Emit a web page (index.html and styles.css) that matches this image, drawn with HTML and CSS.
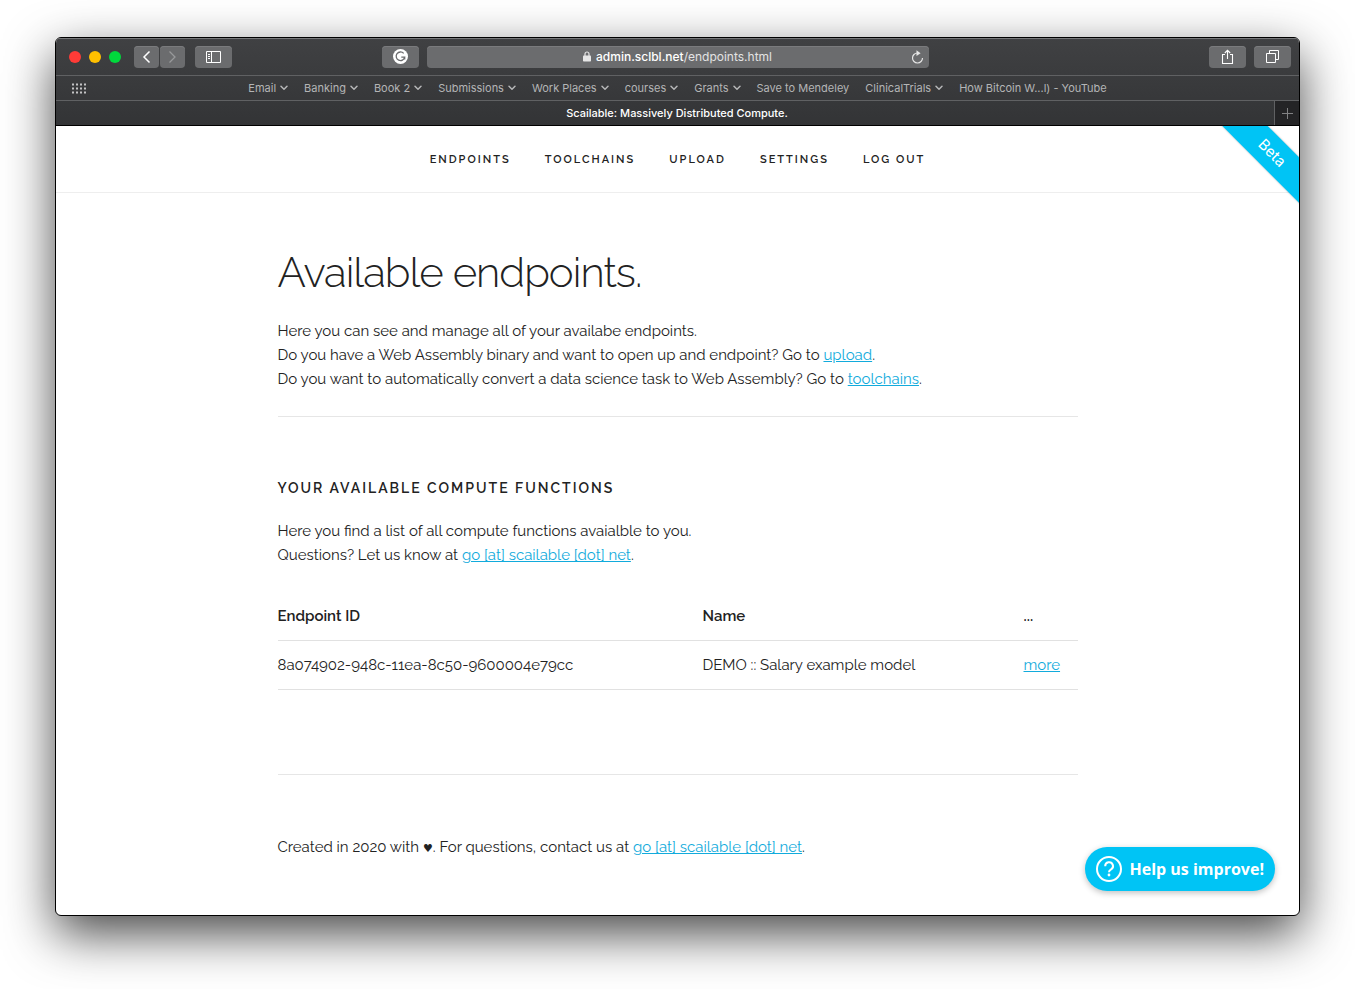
FILE: index.html
```html
<!DOCTYPE html>
<html lang="en">
<head>
<meta charset="utf-8">
<meta name="viewport" content="width=device-width, initial-scale=1">
<title>Scailable: Massively Distributed Compute.</title>
<link rel="stylesheet" href="styles.css">
</head>
<body>
<svg class="defs" aria-hidden="true">
  <symbol id="chevron" viewBox="0 0 8 6"><path d="M1 1.3 4 4.3 7 1.3" fill="none" stroke="currentColor" stroke-width="1.5" stroke-linecap="round" stroke-linejoin="round"/></symbol>
</svg>
<div class="window">
  <header class="chrome">
    <div class="toolbar">
      <div class="toolbar-side">
        <div class="lights"><span class="light red"></span><span class="light yellow"></span><span class="light green"></span></div>
        <div class="history">
          <button class="tool half" type="button" aria-label="Back"><svg width="9" height="14" viewBox="0 0 9 14"><path d="M7.5 1.5 2 7l5.500 5.500" fill="none" stroke="#fff" stroke-width="1.5"/></svg></button>
          <button class="tool half" type="button" aria-label="Forward"><svg width="9" height="14" viewBox="0 0 9 14"><path d="M1.500 1.500 7 7l-5.500 5.500" fill="none" stroke="#98999b" stroke-width="1.300"/></svg></button>
        </div>
        <button class="tool" type="button" aria-label="Show sidebar"><svg width="15" height="12" viewBox="0 0 15 12"><path d="M.5.500h14v11H.5zM5.500.500v11M2 3.500h2M2 5.500h2M2 7.500h2" fill="none" stroke="#fff"/></svg></button>
        <button class="tool push" type="button" aria-label="Grammarly"><svg width="15" height="15" viewBox="0 0 15 15"><circle cx="7.500" cy="7.500" r="7.500" fill="#fff"/><path d="M10.700 4.400A4.300 4.300 0 1 0 11.700 8.200H8.300M11.700 8v2.600" fill="none" stroke="#6b6c6e" stroke-width="1.300"/></svg></button>
      </div>
      <div class="address">
        <button class="url" type="button">
          <svg width="8" height="11" viewBox="0 0 8 11"><path d="M2 5V3a2 2 0 0 1 4 0v2" fill="none" stroke="#e6e6e6" stroke-width="1.200"/><rect y="4.500" width="8" height="6" rx=".8" fill="#e6e6e6"/></svg>
          <span><span class="host">admin.sclbl.net</span>/endpoints.html</span>
        </button>
        <button class="reload" type="button" aria-label="Reload"><svg width="13" height="14" viewBox="0 0 13 14"><path d="M6.500 3A5 5 0 1 0 11.500 8" fill="none" stroke="#e6e6e6" stroke-width="1.200"/><path d="M5.500.300 9.600 3.300 5.500 6z" fill="#e6e6e6"/></svg></button>
      </div>
      <div class="toolbar-side end">
        <button class="tool" type="button" aria-label="Share"><svg width="13" height="16" viewBox="0 0 13 16"><path d="M4 5.500H1.500v9h10v-9H9M6.500 10V1.500M3.800 4 6.500 1.300 9.200 4" fill="none" stroke="#fff" stroke-width="1.100"/></svg></button>
        <button class="tool" type="button" aria-label="Tab overview"><svg width="13" height="13" viewBox="0 0 13 13"><path d="M.5 3.500h9v9h-9zM3.500 3.500v-3h9v9h-3" fill="none" stroke="#fff"/></svg></button>
      </div>
    </div>
    <div class="favorites">
      <button class="grid-button" type="button" aria-label="Favorites"><svg width="15" height="11" viewBox="0 0 15 11"><path d="M0 1.500h15M0 5.500h15M0 9.500h15" stroke="#c4c4c5" stroke-width="2" stroke-dasharray="2 2"/></svg></button>
      <nav class="bookmarks" aria-label="Bookmarks">
        <button type="button">Email <svg><use href="#chevron"/></svg></button>
        <button type="button">Banking <svg><use href="#chevron"/></svg></button>
        <button type="button">Book 2 <svg><use href="#chevron"/></svg></button>
        <button type="button">Submissions <svg><use href="#chevron"/></svg></button>
        <button type="button">Work Places <svg><use href="#chevron"/></svg></button>
        <button type="button">courses <svg><use href="#chevron"/></svg></button>
        <button type="button">Grants <svg><use href="#chevron"/></svg></button>
        <button type="button">Save to Mendeley</button>
        <button type="button">ClinicalTrials <svg><use href="#chevron"/></svg></button>
        <button type="button">How Bitcoin W...l) - YouTube</button>
      </nav>
    </div>
    <div class="tabs">
      <button class="tab" type="button">Scailable: Massively Distributed Compute.</button>
      <button class="new-tab" type="button" aria-label="New tab"><svg width="11" height="11" viewBox="0 0 11 11"><path d="M5.500 0v11M0 5.500h11" stroke="#828284"/></svg></button>
    </div>
  </header>
  <div class="page">
    <nav class="site-nav">
      <a href="#">Endpoints</a>
      <a href="#">Toolchains</a>
      <a href="#">Upload</a>
      <a href="#">Settings</a>
      <a href="#">Log out</a>
    </nav>
    <div class="ribbon">Beta</div>
    <main class="container">
      <section class="intro">
        <h1>Available endpoints.</h1>
        <p>Here you can see and manage all of your availabe endpoints.<br>
        Do you have a Web Assembly binary and want to open up and endpoint? Go to <a href="#">upload</a>.<br>
        Do you want to automatically convert a data science task to Web Assembly? Go to <a href="#">toolchains</a>.</p>
      </section>
      <section class="functions">
        <h2>Your available compute functions</h2>
        <p>Here you find a list of all compute functions avaialble to you.<br>
        Questions? Let us know at <a href="#">go [at] scailable [dot] net</a>.</p>
        <table>
          <thead><tr><th>Endpoint ID</th><th class="col-name">Name</th><th class="col-more">...</th></tr></thead>
          <tbody><tr><td>8a074902-948c-11ea-8c50-9600004e79cc</td><td>DEMO :: Salary example model</td><td><a href="#">more</a></td></tr></tbody>
        </table>
      </section>
      <footer>Created in 2020 with <span class="heart">♥</span>. For questions, contact us at <a href="#">go [at] scailable [dot] net</a>.</footer>
    </main>
    <button class="help" type="button">
      <svg width="26" height="26" viewBox="0 0 26 26"><circle cx="13" cy="13" r="12" fill="none" stroke="#fff" stroke-width="2"/><path d="M9.200 10.300a3.900 3.900 0 1 1 5.600 3.300C13.500 14.300 13 14.900 13 16.200" fill="none" stroke="#fff" stroke-width="2"/><circle cx="13" cy="19" r="1.400" fill="#fff"/></svg>
      Help us improve!
    </button>
  </div>
</div>
</body>
</html>
```

FILE: styles.css
```css
* { box-sizing: border-box; }

body {
  margin: 0;
  min-height: 100vh;
  padding: 37px 55px 73px;
  display: flex;
  background: #fff;
  color: #222;
  font: 15px/24px Raleway, Lato, sans-serif;
}

button {
  margin: 0;
  padding: 0;
  border: 0;
  background: none;
  color: inherit;
  font: inherit;
}

svg { flex: none; }
.defs { position: absolute; width: 0; height: 0; }

.window {
  flex: 1;
  min-width: 0;
  display: flex;
  flex-direction: column;
  overflow: hidden;
  border: 1px solid #000;
  border-radius: 6px;
  background: #fff;
  box-shadow: 0 18px 50px rgba(0, 0, 0, .72);
}

.chrome {
  border-bottom: 1px solid #000;
  background: linear-gradient(#404143, #333436);
  box-shadow: inset 0 1px #77787a;
  color: #b4b5b6;
  font: 11px/14px Inter, sans-serif;
}

.toolbar {
  display: grid;
  grid-template-columns: 1fr minmax(200px, 502px) 1fr;
  gap: 8px;
  align-items: center;
  height: 38px;
  padding: 0 8px;
  border-bottom: 1px solid #606163;
}

.toolbar-side { display: flex; align-items: center; gap: 10px; }
.toolbar-side.end { justify-content: flex-end; gap: 8px; }
.lights { display: flex; gap: 8px; margin: 0 3px 0 5px; }
.light { width: 12px; height: 12px; border-radius: 50%; }
.red { background: #ff3b37; }
.yellow { background: #ffc000; }
.green { background: #00d93c; }
.history { display: flex; gap: 1px; }

.tool {
  display: flex;
  align-items: center;
  justify-content: center;
  width: 37px;
  height: 22px;
  border-radius: 4px;
  background: #6b6c6e;
  box-shadow: inset 0 1px #7a7b7d;
}
.tool.half { width: 25px; }
.push { margin-left: auto; }

.address {
  display: flex;
  align-items: center;
  height: 22px;
  padding: 0 5px;
  border-radius: 4px;
  background: #6b6c6e;
  box-shadow: inset 0 1px #7a7b7d;
  color: #e3e3e3;
  font-size: 12px;
}
.url {
  flex: 1;
  display: flex;
  align-items: center;
  justify-content: center;
  gap: 5px;
  padding-left: 13px;
}
.host { color: #fff; font-weight: 500; }
.reload { display: flex; }

.favorites {
  display: grid;
  grid-template-columns: 1fr auto 1fr;
  align-items: center;
  height: 25px;
  padding: 0 16px;
  border-bottom: 1px solid #606163;
}
.grid-button { display: flex; }
.bookmarks { display: flex; gap: 16px; white-space: nowrap; }
.bookmarks button { display: flex; align-items: center; gap: 4px; }
.bookmarks svg { width: 8px; height: 6px; }

.tabs { display: flex; height: 24px; }
.tab { flex: 1; padding-left: 24px; color: #fff; font-weight: 500; }
.new-tab {
  display: flex;
  align-items: center;
  justify-content: center;
  width: 25px;
  border-left: 1px solid #606163;
  background: #242426;
}

.page {
  position: relative;
  flex: 1;
  overflow: hidden;
}

.site-nav {
  display: flex;
  justify-content: center;
  gap: 34px;
  height: 67px;
  padding-top: 22px;
  border-bottom: 1px solid #eee;
}
.site-nav a {
  color: #222;
  font-size: 11px;
  font-weight: 600;
  letter-spacing: 2px;
  text-decoration: none;
  text-transform: uppercase;
}

.ribbon {
  position: absolute;
  top: 11px;
  right: -48px;
  width: 150px;
  background: #00c4f5;
  box-shadow: 0 0 2px rgba(0, 0, 0, .3);
  color: #fff;
  font: 15px/32px Inter, sans-serif;
  text-align: center;
  transform: rotate(45deg);
}

.container {
  max-width: 800px;
  margin: 0 auto;
}
.container a { color: #12abdc; }

h1, h2, p { margin: 0; }

.intro {
  padding: 54px 0 25px;
  border-bottom: 1px solid #e6e6e6;
}
h1 {
  margin-bottom: 20px;
  font-size: 42px;
  font-weight: 300;
  line-height: 52px;
  letter-spacing: -1px;
}

.functions {
  padding: 59px 0 84px;
  border-bottom: 1px solid #e6e6e6;
}
h2 {
  margin-bottom: 19px;
  font-size: 14px;
  font-weight: 600;
  line-height: 24px;
  letter-spacing: 2px;
  text-transform: uppercase;
}

table {
  width: 100%;
  margin-top: 25px;
  border-collapse: collapse;
  table-layout: fixed;
}
th, td {
  padding: 12px 15px 12px 0;
  border-bottom: 1px solid #e1e1e1;
  text-align: left;
}
th { font-weight: 600; }
th:last-child, td:last-child { padding-right: 0; }
.col-name { width: 321px; }
.col-more { width: 54px; }

footer { padding: 60px 0 56px; }
.heart { font-family: "DejaVu Sans", sans-serif; font-size: 11px; line-height: 1; }

.help {
  position: absolute;
  right: 24px;
  bottom: 24px;
  display: flex;
  align-items: center;
  gap: 7px;
  height: 44px;
  padding: 0 11px;
  border-radius: 22px;
  background: #00c4f5;
  box-shadow: 0 2px 6px rgba(0, 0, 0, .25);
  color: #fff;
  font: 700 16px/24px "Open Sans", sans-serif;
  white-space: nowrap;
}
```
